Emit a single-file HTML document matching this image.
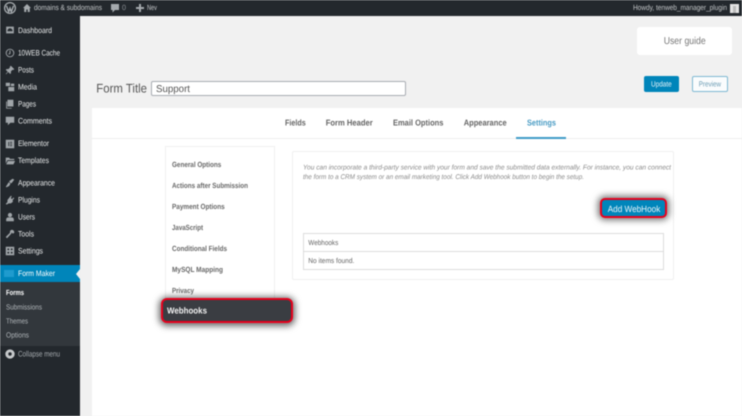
<!DOCTYPE html>
<html><head><meta charset="utf-8">
<style>
html,body{margin:0;padding:0}
body{width:742px;height:416px;overflow:hidden;background:#f1f1f1;font-family:"Liberation Sans",sans-serif;position:relative}
#w{position:absolute;left:0;top:0;width:742px;height:416px;overflow:hidden;filter:blur(.4px)}
.a{position:absolute}
.i{position:absolute;left:3.500px;width:12px;height:12px;fill:#a0a5a9;transform:scale(.85)}
svg.o{position:absolute;left:0;top:0}
svg.o text{font-family:"Liberation Sans",sans-serif;text-rendering:geometricPrecision}
.bar{font-size:7.600px;fill:#c3c6c8}
.m{font-size:8px;fill:#e6e8e9}
.sub{font-size:7.500px;fill:#b0b5b9}
.s{font-size:7.500px;font-weight:bold;fill:#686868}
.tab{font-size:8.500px;font-weight:bold;fill:#666}
</style></head><body><div id="w">
<!-- admin bar -->
<div class="a" style="left:0;top:0;width:742px;height:16px;background:#23282d"></div>
<svg class="a" style="left:3px;top:1px" width="14" height="14" viewBox="0 0 14 14"><circle cx="7" cy="7" r="5.400" fill="none" stroke="#a5aaae" stroke-width="1.300"/><path d="M3.400 4.800l2.300 6 1.300-3.700 1.300 3.700 2.300-6" fill="none" stroke="#a5aaae" stroke-width="1.400"/></svg>
<svg class="a" style="left:22px;top:3px" width="10" height="10" viewBox="0 0 10 10"><path d="M5 1L1 5h1.200v4h2.100V6.500h1.400V9h2.100V5H9z" fill="#a5aaae"/></svg>
<svg class="a" style="left:110px;top:3px" width="10" height="11" viewBox="0 0 10 11"><path d="M1 1h8v6H5L2.500 9.500V7H1z" fill="#a5aaae"/></svg>
<svg class="a" style="left:135px;top:3px" width="10" height="10" viewBox="0 0 10 10"><path d="M4 1h2v3h3v2H6v3H4V6H1V4h3z" fill="#a5aaae"/></svg>
<div class="a" style="left:730px;top:4px;width:9px;height:9px;background:#e4e4e4"></div>
<div class="a" style="left:733px;top:6px;width:3px;height:7px;background:#bbb"></div>
<!-- sidebar -->
<div class="a" style="left:0;top:16px;width:80px;height:400px;background:#23282d"></div>
<svg class="i" style="top:24px" viewBox="0 0 12 12"><path fill-rule="evenodd" d="M1.500 2h9v8h-9zM6 4a3 3 0 0 0-3 3.500h6A3 3 0 0 0 6 4z"/></svg>
<svg class="i" style="top:47px" viewBox="0 0 12 12"><circle cx="6" cy="6" r="4.500" fill="none" stroke="#a0a5a9" stroke-width="1.100"/><path d="M6 3v3.400l-1.600 1" fill="none" stroke="#a0a5a9" stroke-width="1.100"/></svg>
<svg class="i" style="top:64px" viewBox="0 0 12 12"><path d="M7 1l4 4-1 1-1-.3-2 2 .2 2-1 1-2.200-2.300L1.500 11l-.5-.5 2.300-2.500L1 5.800l1-1 2 .2 2-2L5.800 2z"/></svg>
<svg class="i" style="top:81px" viewBox="0 0 12 12"><path d="M1 1h5v4H1zM4 6h7v5H4zM7 2h4v3H7z"/></svg>
<svg class="i" style="top:98px" viewBox="0 0 12 12"><path d="M3 1h7v8H3zM1.500 3h1v7.500H8v1H1.500z"/></svg>
<svg class="i" style="top:115px" viewBox="0 0 12 12"><path d="M1 1h10v7H6.500L3.500 11V8H1z"/></svg>
<svg class="i" style="top:138px" viewBox="0 0 12 12"><path fill-rule="evenodd" d="M1 1h10v10H1zM4 3.500v5h1v-5zM6 3.500v1h2.500v-1zM6 5.500v1h2.500v-1zM6 7.500v1h2.500v-1z"/></svg>
<svg class="i" style="top:155px" viewBox="0 0 12 12"><path d="M1 2h4l1 1.500h5V5H3L1 9zM3.500 6H12l-2 4H1.500z"/></svg>
<svg class="i" style="top:177px" viewBox="0 0 12 12"><path d="M5 4l4-3 2 1-3 4-1.500.5zM4.500 5L6.500 7 5 9.500 2 11l-1-.5 2-3z"/></svg>
<svg class="i" style="top:194px" viewBox="0 0 12 12"><path d="M7 1l1 .5L7 4l1.500 1L10 3l1 .8L9 6.500 9.500 8 7 10H4.500L2 11.500 1 10.500 3 8.500V6z"/></svg>
<svg class="i" style="top:211px" viewBox="0 0 12 12"><circle cx="6" cy="3.700" r="2.500"/><path d="M1.500 11V8.500Q2 6.500 4 6.500h4q2 0 2.500 2V11z"/></svg>
<svg class="i" style="top:228px" viewBox="0 0 12 12"><path d="M8 1a3 3 0 0 1 3 3.500L9.500 5.500 8 4.500 8.500 2.500 7.500 5.500 2.500 11 1 9.500 6 4.500A3 3 0 0 1 8 1z"/></svg>
<svg class="i" style="top:245px" viewBox="0 0 12 12"><path fill-rule="evenodd" d="M1 1h10v10H1zM3 3v2h2V3zM7 3v2h2V3zM3 7v2h2V7zM7 7v2h2V7z"/></svg>
<div class="a" style="left:0;top:265px;width:80px;height:17px;background:#0085ba"></div>
<div class="a" style="left:4px;top:270px;width:10px;height:7px;background:#1f9bce"></div>
<div class="a" style="left:76px;top:269px;width:0;height:0;border:5px solid transparent;border-left:0;border-right:4px solid #f1f1f1"></div>
<div class="a" style="left:0;top:282px;width:80px;height:64px;background:#32373c"></div>
<svg class="i" style="top:348px;left:3.500px" viewBox="0 0 12 12"><path fill-rule="evenodd" d="M6 .5a5.500 5.500 0 1 1 0 11 5.500 5.500 0 0 1 0-11zM6 4a2 2 0 1 0 0 4 2 2 0 0 0 0-4z" fill="#c5c8ca"/></svg>
<!-- header area -->
<div class="a" style="left:637px;top:27px;width:95px;height:28px;background:#fff;border-radius:3px"></div>
<div class="a" style="left:151px;top:81px;width:255px;height:15px;background:#fff;border:1px solid #a8acb2;border-radius:2px;box-sizing:border-box"></div>
<div class="a" style="left:644px;top:76px;width:34.500px;height:16px;background:#0085ba;border-radius:2px"></div>
<div class="a" style="left:692px;top:76px;width:36px;height:16px;background:#fafcfd;border:1px solid #7fb9d2;border-radius:2px;box-sizing:border-box"></div>
<!-- main panel -->
<div class="a" style="left:92px;top:108px;width:650px;height:308px;background:#fff"></div>
<div class="a" style="left:92px;top:138px;width:650px;height:1px;background:#eee"></div>
<div class="a" style="left:516px;top:137px;width:50px;height:2px;background:#3f9cc7"></div>
<!-- side nav -->
<div class="a" style="left:165px;top:146px;width:110px;height:170px;background:#fff;border:1px solid #f0f0f0;box-sizing:border-box"></div>
<div class="a" style="left:161px;top:298px;width:132px;height:25px;background:#3a3d42;border:2px solid #e8001c;border-radius:6px;box-sizing:border-box;box-shadow:0 1px 7px 2px rgba(0,0,0,.6)"></div>
<!-- content box -->
<div class="a" style="left:292px;top:151px;width:382px;height:129px;background:#fff;border:1px solid #f0f0f0;border-radius:2px;box-sizing:border-box"></div>
<div class="a" style="left:600px;top:198px;width:67px;height:20px;background:#0085ba;border:2px solid #e8001c;border-radius:5px;box-sizing:border-box;box-shadow:0 0 7px 2px rgba(0,0,0,.55)"></div>
<div class="a" style="left:303px;top:233px;width:361px;height:37px;background:#fff;border:1px solid #dcdcdc;box-sizing:border-box"></div>
<div class="a" style="left:303px;top:251px;width:361px;height:1px;background:#dcdcdc"></div>
<!-- text -->
<svg class="o" width="742" height="416" viewBox="0 0 742 416">
<g transform="translate(0,-.4)">
<text class="bar" x="34" y="10.500" textLength="68" lengthAdjust="spacingAndGlyphs">domains &amp; subdomains</text>
<text class="bar" x="122" y="10.500" textLength="4" lengthAdjust="spacingAndGlyphs" style="fill:#8a8f94">0</text>
<text class="bar" x="147" y="10.500" textLength="10" lengthAdjust="spacingAndGlyphs">Nev</text>
<text class="bar" x="633" y="10.500" textLength="94" lengthAdjust="spacingAndGlyphs">Howdy, tenweb_manager_plugin</text>
<text class="m" x="18" y="33.500" textLength="34" lengthAdjust="spacingAndGlyphs">Dashboard</text>
<text class="m" x="18" y="56" textLength="42" lengthAdjust="spacingAndGlyphs">10WEB Cache</text>
<text class="m" x="18" y="73" textLength="16" lengthAdjust="spacingAndGlyphs">Posts</text>
<text class="m" x="18" y="90" textLength="19" lengthAdjust="spacingAndGlyphs">Media</text>
<text class="m" x="18" y="107" textLength="18" lengthAdjust="spacingAndGlyphs">Pages</text>
<text class="m" x="18" y="124" textLength="34" lengthAdjust="spacingAndGlyphs">Comments</text>
<text class="m" x="18" y="146.500" textLength="31" lengthAdjust="spacingAndGlyphs">Elementor</text>
<text class="m" x="18" y="163.500" textLength="31" lengthAdjust="spacingAndGlyphs">Templates</text>
<text class="m" x="18" y="186" textLength="37" lengthAdjust="spacingAndGlyphs">Appearance</text>
<text class="m" x="18" y="203" textLength="22" lengthAdjust="spacingAndGlyphs">Plugins</text>
<text class="m" x="18" y="220" textLength="17" lengthAdjust="spacingAndGlyphs">Users</text>
<text class="m" x="18" y="237" textLength="16" lengthAdjust="spacingAndGlyphs">Tools</text>
<text class="m" x="18" y="254" textLength="25" lengthAdjust="spacingAndGlyphs">Settings</text>
<text class="m" x="18" y="276.500" textLength="37" lengthAdjust="spacingAndGlyphs" style="fill:#fff">Form Maker</text>
<text class="sub" x="6" y="295.500" textLength="18" lengthAdjust="spacingAndGlyphs" style="fill:#fff;font-weight:bold">Forms</text>
<text class="sub" x="6" y="310" textLength="36" lengthAdjust="spacingAndGlyphs">Submissions</text>
<text class="sub" x="6" y="324" textLength="22" lengthAdjust="spacingAndGlyphs">Themes</text>
<text class="sub" x="6" y="338" textLength="23" lengthAdjust="spacingAndGlyphs">Options</text>
<text class="m" x="18" y="357" textLength="42" lengthAdjust="spacingAndGlyphs" style="fill:#a4a9ad">Collapse menu</text>
<text x="663.700" y="44.500" font-size="10" fill="#777" textLength="42" lengthAdjust="spacingAndGlyphs">User guide</text>
<text x="96.300" y="92.800" font-size="12.500" fill="#555" textLength="50.700" lengthAdjust="spacingAndGlyphs">Form Title</text>
<text x="156" y="92.500" font-size="10" fill="#555" textLength="34" lengthAdjust="spacingAndGlyphs">Support</text>
<text x="651" y="87" font-size="7.600" fill="#e8f4f9" textLength="20.700" lengthAdjust="spacingAndGlyphs">Update</text>
<text x="698.700" y="87" font-size="7.600" fill="#6d9db5" textLength="22.300" lengthAdjust="spacingAndGlyphs">Preview</text>
<text class="tab" x="285" y="126" textLength="20.700" lengthAdjust="spacingAndGlyphs">Fields</text>
<text class="tab" x="325.700" y="126" textLength="47" lengthAdjust="spacingAndGlyphs">Form Header</text>
<text class="tab" x="393" y="126" textLength="50.400" lengthAdjust="spacingAndGlyphs">Email Options</text>
<text class="tab" x="463.700" y="126" textLength="43" lengthAdjust="spacingAndGlyphs">Appearance</text>
<text class="tab" x="527" y="126" textLength="29" lengthAdjust="spacingAndGlyphs" style="fill:#4a9cc4">Settings</text>
<text class="s" x="172" y="167.500" textLength="49.300" lengthAdjust="spacingAndGlyphs">General Options</text>
<text class="s" x="172" y="188.500" textLength="76" lengthAdjust="spacingAndGlyphs">Actions after Submission</text>
<text class="s" x="172" y="209.500" textLength="52.700" lengthAdjust="spacingAndGlyphs">Payment Options</text>
<text class="s" x="172" y="230.500" textLength="31" lengthAdjust="spacingAndGlyphs">JavaScript</text>
<text class="s" x="172" y="251.500" textLength="55" lengthAdjust="spacingAndGlyphs">Conditional Fields</text>
<text class="s" x="172" y="272.500" textLength="51" lengthAdjust="spacingAndGlyphs">MySQL Mapping</text>
<text class="s" x="172" y="293.500" textLength="22" lengthAdjust="spacingAndGlyphs">Privacy</text>
<text x="167" y="314" font-size="8.800" font-weight="bold" fill="#f2f2f2" textLength="40" lengthAdjust="spacingAndGlyphs">Webhooks</text>
<text x="303" y="170" font-size="6.900" font-style="italic" fill="#8a8a8a" textLength="368" lengthAdjust="spacingAndGlyphs">You can incorporate a third-party service with your form and save the submitted data externally. For instance, you can connect</text>
<text x="303" y="179.500" font-size="6.900" font-style="italic" fill="#8a8a8a" textLength="281" lengthAdjust="spacingAndGlyphs">the form to a CRM system or an email marketing tool. Click Add Webhook button to begin the setup.</text>
<text x="607.700" y="212.300" font-size="9" fill="#e8f4f9" textLength="52.600" lengthAdjust="spacingAndGlyphs">Add WebHook</text>
<text x="308.300" y="245.300" font-size="7.200" fill="#666" textLength="30" lengthAdjust="spacingAndGlyphs">Webhooks</text>
<text x="308.300" y="263.300" font-size="7.200" fill="#666" textLength="46" lengthAdjust="spacingAndGlyphs">No items found.</text>
</g>
</svg>
</div></body></html>
